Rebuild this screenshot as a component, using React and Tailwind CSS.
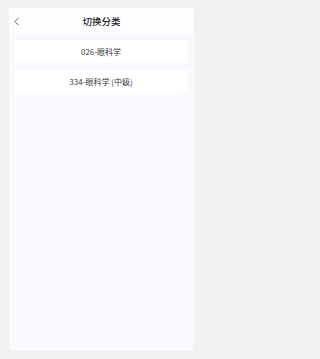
import { ChevronLeft } from "lucide-react";

const categories = ["026-眼科学", "334-眼科学 (中级)"];

export default function App() {
	return (
		<div
			className="w-full min-h-[359px] bg-[#f1f1f1] pt-[8px] pl-[9px] pr-[8px] pb-[8px]"
			style={{ fontFamily: '"Noto Sans CJK SC", "Noto Sans", sans-serif' }}
		>
			<div className="flex flex-col h-[343px] w-[185px] bg-[#f8f9fe]">
				<div className="relative h-[26px] flex items-center justify-center bg-gradient-to-b from-white to-[#fbfcff]">
					<ChevronLeft
						className="absolute left-[1px] top-[7px] text-[#444]"
						size={13}
						strokeWidth={1.5}
					/>
					<span className="text-[9.5px] font-medium text-[#222]">切换分类</span>
				</div>
				<div className="flex flex-col gap-[7px] pl-[5px] pr-[6px] pt-[6px]">
					{categories.map((name) => (
						<div
							key={name}
							className="h-[23px] flex items-center justify-center bg-white text-[8px] text-[#3a3a3a]"
						>
							{name}
						</div>
					))}
				</div>
			</div>
		</div>
	);
}
